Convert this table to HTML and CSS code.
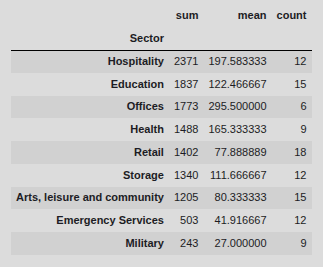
FILE: index.html
```html
<!DOCTYPE html>
<html>
<head>
<meta charset="utf-8">
<link rel="stylesheet" href="styles.css">
</head>
<body>
<table class="df">
  <thead>
    <tr class="cols">
      <th></th>
      <th>sum</th>
      <th>mean</th>
      <th>count</th>
    </tr>
    <tr class="idxname">
      <th>Sector</th>
      <th></th>
      <th></th>
      <th></th>
    </tr>
  </thead>
  <tbody>
    <tr><th>Hospitality</th><td>2371</td><td>197.583333</td><td>12</td></tr>
    <tr><th>Education</th><td>1837</td><td>122.466667</td><td>15</td></tr>
    <tr><th>Offices</th><td>1773</td><td>295.500000</td><td>6</td></tr>
    <tr><th>Health</th><td>1488</td><td>165.333333</td><td>9</td></tr>
    <tr><th>Retail</th><td>1402</td><td>77.888889</td><td>18</td></tr>
    <tr><th>Storage</th><td>1340</td><td>111.666667</td><td>12</td></tr>
    <tr><th>Arts, leisure and community</th><td>1205</td><td>80.333333</td><td>15</td></tr>
    <tr><th>Emergency Services</th><td>503</td><td>41.916667</td><td>12</td></tr>
    <tr><th>Military</th><td>243</td><td>27.000000</td><td>9</td></tr>
  </tbody>
</table>
</body>
</html>
```
FILE: styles.css
```css
html, body {
  margin: 0;
  padding: 0;
  background: #dcdcdc;
}
body {
  padding: 4px 0 0 11px;
  font-family: "Liberation Sans", Arial, sans-serif;
  font-size: 11px;
  color: #1c1c24;
}
.df {
  border-collapse: collapse;
  border-spacing: 0;
}
.df th, .df td {
  padding: 0 5px;
  text-align: right;
  vertical-align: middle;
  white-space: nowrap;
  line-height: 13px;
  box-sizing: border-box;
}
.df thead tr {
  height: 23px;
}
.df tbody tr {
  height: 22.75px;
}
.df th {
  font-weight: bold;
}
.df thead {
  border-bottom: 1px solid #000;
}
.df tbody tr:nth-child(odd) {
  background: #d1d1d1;
}
```
